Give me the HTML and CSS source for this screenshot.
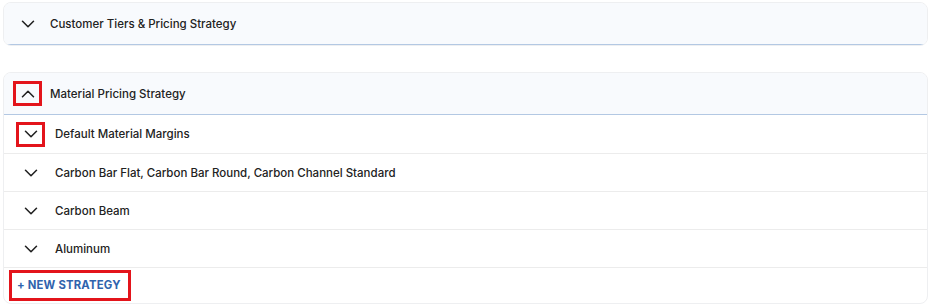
FILE: index.html
```html
<!DOCTYPE html>
<html lang="en">
<head>
    <meta charset="UTF-8">
    <title>Pricing Strategy</title>
    <link rel="stylesheet" href="styles.css">
</head>
<body>
    <div class="page">
        <div class="panel">
            <div class="panel-head">
                <span class="toggle">
                    <svg viewBox="0 0 24 24" class="chev"><path d="M6 9l6 6 6-6"/></svg>
                </span>
                <span class="panel-title">Customer Tiers &amp; Pricing Strategy</span>
            </div>
        </div>

        <div class="panel">
            <div class="panel-head">
                <span class="toggle marked">
                    <svg viewBox="0 0 24 24" class="chev"><path d="M6 15l6-6 6 6"/></svg>
                </span>
                <span class="panel-title">Material Pricing Strategy</span>
            </div>
            <div class="panel-body">
                <div class="row">
                    <span class="toggle marked">
                        <svg viewBox="0 0 24 24" class="chev"><path d="M6 9l6 6 6-6"/></svg>
                    </span>
                    <span class="row-title">Default Material Margins</span>
                </div>
                <div class="row">
                    <span class="toggle">
                        <svg viewBox="0 0 24 24" class="chev"><path d="M6 9l6 6 6-6"/></svg>
                    </span>
                    <span class="row-title">Carbon Bar Flat, Carbon Bar Round, Carbon Channel Standard</span>
                </div>
                <div class="row">
                    <span class="toggle">
                        <svg viewBox="0 0 24 24" class="chev"><path d="M6 9l6 6 6-6"/></svg>
                    </span>
                    <span class="row-title">Carbon Beam</span>
                </div>
                <div class="row">
                    <span class="toggle">
                        <svg viewBox="0 0 24 24" class="chev"><path d="M6 9l6 6 6-6"/></svg>
                    </span>
                    <span class="row-title">Aluminum</span>
                </div>
                <div class="actions">
                    <button class="add-btn">+ New Strategy</button>
                </div>
            </div>
        </div>
    </div>
</body>
</html>
```

FILE: styles.css
```css
body {
    margin: 0;
    background: #fff;
    font-family: Inter, "Noto Sans", sans-serif;
    color: #222;
}

.page {
    padding: 2px 8px 0 3px;
    display: flex;
    flex-direction: column;
    gap: 26px;
}

.panel {
    border: 1px solid #eeeff1;
    border-radius: 8px;
    background: #fff;
    overflow: hidden;
}

.panel-head {
    display: flex;
    align-items: center;
    height: 41px;
    padding-left: 9px;
    background: #f8fafd;
    border-bottom: 1px solid #b3c8e3;
}

.toggle {
    box-sizing: border-box;
    display: flex;
    align-items: center;
    justify-content: center;
    width: 29px;
    height: 25px;
    margin-right: 8px;
    border: 3px solid transparent;
}

.toggle.marked {
    border-color: #e3141b;
}

.chev {
    width: 22px;
    height: 22px;
    fill: none;
    stroke: #222;
    stroke-width: 1.7;
    stroke-linecap: round;
    stroke-linejoin: round;
}

.panel-title,
.row-title {
    font-size: 11.5px;
    font-weight: 500;
}

.row {
    display: flex;
    align-items: center;
    height: 37px;
    padding-left: 12px;
    border-bottom: 1px solid #ececec;
}

.row:first-child {
    height: 38px;
}

.row .toggle {
    margin-right: 10px;
}

.actions {
    padding: 2px 5px 2px;
}

.add-btn {
    font-family: inherit;
    font-size: 11.3px;
    font-weight: 700;
    text-transform: uppercase;
    color: #2f63ad;
    background: none;
    border: 3px solid #e3141b;
    padding: 5px 7px 6px 5px;
    letter-spacing: 0.2px;
    cursor: pointer;
}
```
